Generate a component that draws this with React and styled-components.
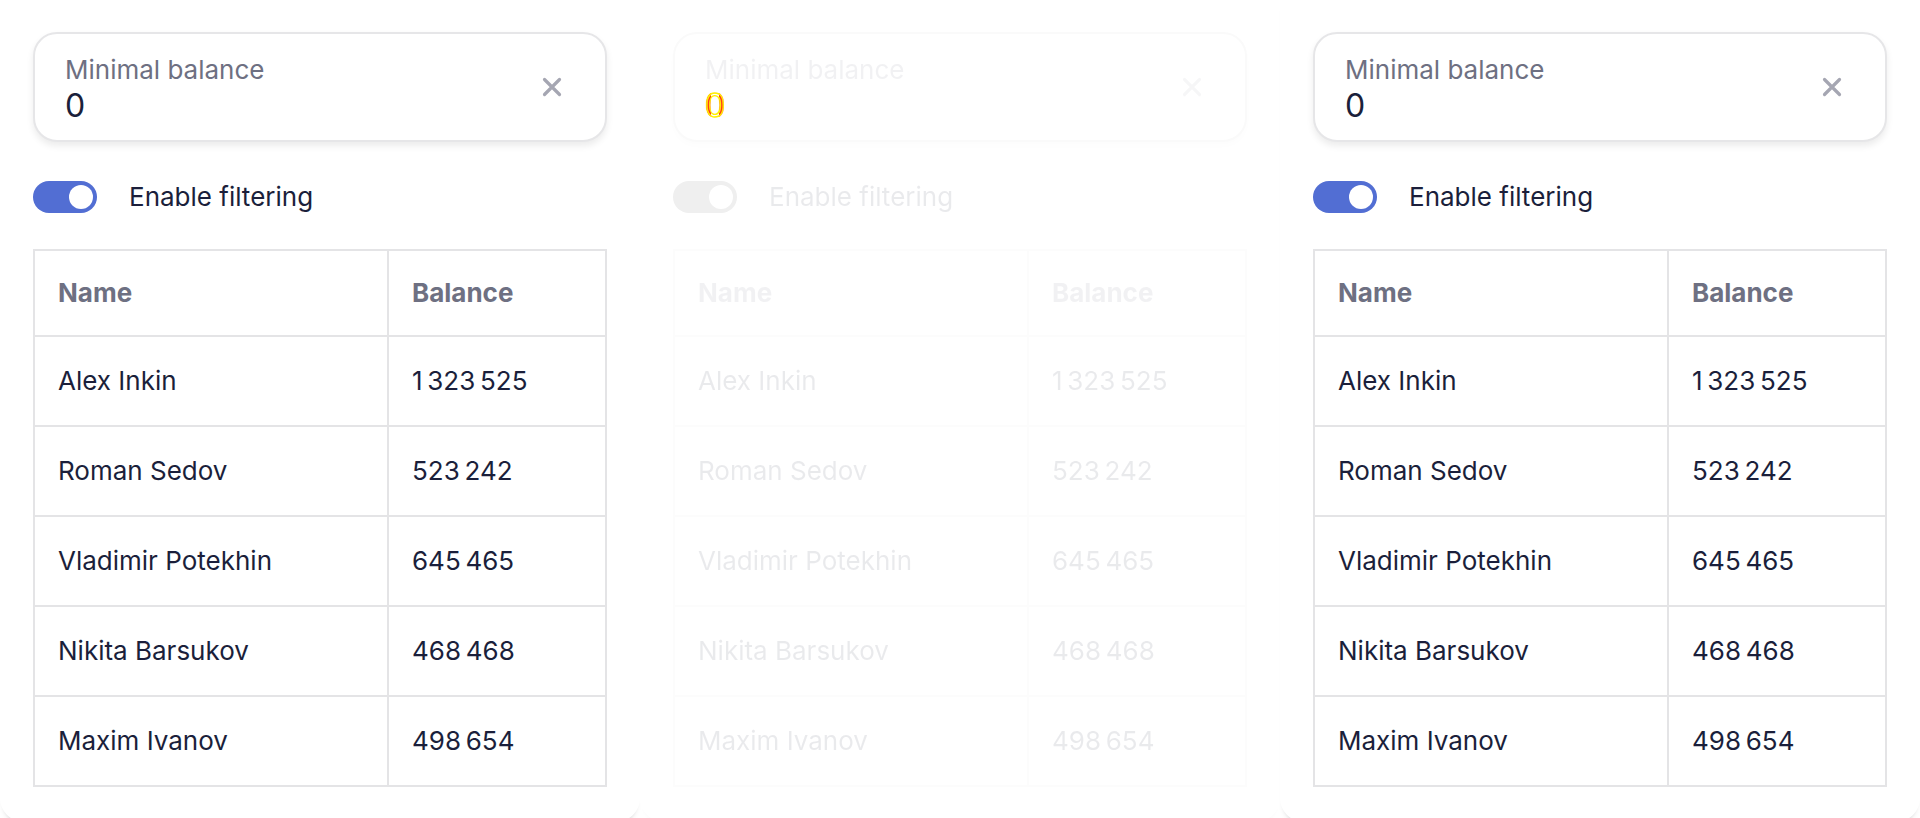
import React from 'react';
import styled, { createGlobalStyle, css } from 'styled-components';

const GlobalStyle = createGlobalStyle`
  html, body {
    margin: 0;
    padding: 0;
    background: #ffffff;
  }

  body {
    font-family: Inter, 'Noto Sans', sans-serif;
    color: #1b1f3b;
    overflow: hidden;
  }
`;

const ROWS = [
  { name: 'Alex Inkin', balance: '1\u2009323\u2009525' },
  { name: 'Roman Sedov', balance: '523\u2009242' },
  { name: 'Vladimir Potekhin', balance: '645\u2009465' },
  { name: 'Nikita Barsukov', balance: '468\u2009468' },
  { name: 'Maxim Ivanov', balance: '498\u2009654' },
];

const fade = css`
  ${(p) => p.$ghost && 'opacity: 0.09;'}
`;

const CloseIcon = () => (
  <svg width="20" height="20" viewBox="0 0 20 20" fill="none">
    <path d="M2.5 2.5L17.5 17.5M17.5 2.5L2.5 17.5" stroke="currentColor" strokeWidth="3.2" strokeLinecap="round" />
  </svg>
);

const Toggle = ({ ghost }) => (
  <Track $ghost={ghost}>
    <Knob />
  </Track>
);

const FilterPanel = ({ ghost }) => (
  <Panel $ghost={ghost}>
    <Field $ghost={ghost}>
      <FieldBody>
        <Label $ghost={ghost}>Minimal balance</Label>
        <Value $mark={ghost}>0</Value>
      </FieldBody>
      <Clear $ghost={ghost}>
        <CloseIcon />
      </Clear>
    </Field>

    <ToggleRow>
      <Toggle ghost={ghost} />
      <ToggleText $ghost={ghost}>Enable filtering</ToggleText>
    </ToggleRow>

    <Table $ghost={ghost}>
      <thead>
        <tr>
          <Head $first>Name</Head>
          <Head>Balance</Head>
        </tr>
      </thead>
      <tbody>
        {ROWS.map((row) => (
          <tr key={row.name}>
            <Cell $first>{row.name}</Cell>
            <Cell>{row.balance}</Cell>
          </tr>
        ))}
      </tbody>
    </Table>
  </Panel>
);

export default function App() {
  return (
    <>
      <GlobalStyle />
      <Page>
        <FilterPanel />
        <FilterPanel ghost />
        <FilterPanel />
      </Page>
    </>
  );
}

const Page = styled.main`
  display: flex;
  width: 1920px;
  height: 818px;
  overflow: hidden;
`;

const Panel = styled.section`
  flex: 0 0 640px;
  height: 822px;
  box-sizing: border-box;
  padding: 32px 33px 0;
  display: flex;
  flex-direction: column;
  background: #ffffff;
  border-radius: 0 0 24px 24px;
  box-shadow: 0 6px 6px -6px rgba(0, 0, 0, ${(p) => (p.$ghost ? 0.06 : 0.35)});
`;

const Field = styled.div`
  display: flex;
  align-items: center;
  height: 110px;
  box-sizing: border-box;
  padding: 0 43px 0 30px;
  background: #ffffff;
  border: 2px solid ${(p) => (p.$ghost ? '#fafafa' : '#e6e6e8')};
  border-radius: 24px;
  box-shadow: 0 4px 7px rgba(0, 0, 0, ${(p) => (p.$ghost ? 0.01 : 0.08)});
`;

const FieldBody = styled.div`
  flex: 1;
  display: flex;
  flex-direction: column;
  padding-top: 5px;
`;

const Label = styled.span`
  font-size: 26px;
  line-height: 32px;
  color: #6e7082;
  ${fade}
`;

const Value = styled.span`
  margin-top: 1px;
  font-size: 32px;
  line-height: 38px;
  color: #1b1f3b;

  ${(p) =>
    p.$mark &&
    css`
      align-self: flex-start;
      color: transparent;
      background: linear-gradient(90deg, #ff1f1f 0 32%, #ffffff 32% 68%, #ff1f1f 68%);
      -webkit-background-clip: text;
      background-clip: text;
      -webkit-text-stroke: 1.4px #fff000;
    `}
`;

const Clear = styled.span`
  display: flex;
  color: #a5a6b2;
  ${fade}
`;

const ToggleRow = styled.label`
  display: flex;
  align-items: center;
  gap: 32px;
  margin-top: 39px;
`;

const Track = styled.span`
  display: flex;
  justify-content: flex-end;
  align-items: center;
  width: 64px;
  height: 32px;
  box-sizing: border-box;
  padding: 0 4px;
  border-radius: 16px;
  background: ${(p) => (p.$ghost ? '#efefef' : '#526ed3')};
`;

const Knob = styled.span`
  width: 24px;
  height: 24px;
  border-radius: 50%;
  background: #ffffff;
`;

const ToggleText = styled.span`
  font-size: 26px;
  line-height: 32px;
  color: #1b1f3b;
  ${fade}
`;

const Table = styled.table`
  margin-top: 36px;
  width: 574px;
  border-collapse: separate;
  border-spacing: 0;
  border-top: 2px solid #e4e4e6;
  border-left: 2px solid #e4e4e6;
  ${fade}
`;

const cellBase = css`
  box-sizing: border-box;
  padding: 0 23px;
  text-align: left;
  vertical-align: middle;
  border-right: 2px solid #e4e4e6;
  border-bottom: 2px solid #e4e4e6;
  font-size: 26px;
  line-height: 32px;
  ${(p) => p.$first && 'width: 354px;'}
`;

const Head = styled.th`
  ${cellBase}
  height: 86px;
  font-weight: 700;
  color: #6e7082;
`;

const Cell = styled.td`
  ${cellBase}
  height: 90px;
  font-weight: 400;
  color: #1b1f3b;
`;
